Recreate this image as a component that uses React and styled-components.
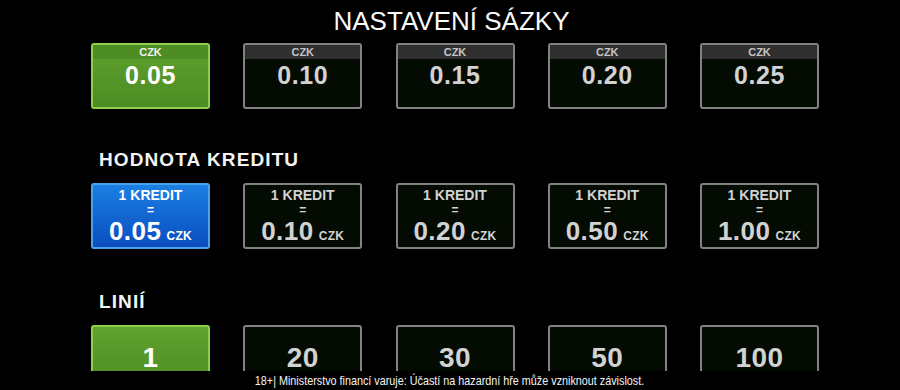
import React from "react"
import styled, { createGlobalStyle, css } from "styled-components"

const GlobalStyle = createGlobalStyle`
  html, body {
    margin: 0;
    padding: 0;
    background: #000;
  }
`

const Page = styled.div`
  position: relative;
  width: 900px;
  height: 390px;
  overflow: hidden;
  background: #000;
  font-family: "Liberation Sans", Arial, sans-serif;
  color: #fff;
`

const Title = styled.div`
  height: 43px;
  line-height: 42px;
  font-size: 26px;
  text-align: center;
  padding-left: 3px;
  color: #fafafa;
`

const Label = styled.div`
  margin: ${p => p.top}px 0 13px 99px;
  font-size: 19px;
  line-height: 20px;
  font-weight: 700;
  letter-spacing: 1.1px;
  color: #f4f4f4;
`

const Row = styled.div`
  display: grid;
  grid-template-columns: repeat(5, 119px);
  column-gap: 33.25px;
  margin-left: 91px;
`

const variants = {
  idle: css`
    background: #040b03;
    border-color: #828282;
    color: #d2d2d2;
  `,
  green: css`
    background: linear-gradient(#61a130, #4c8c22);
    border-color: #8ccf4a;
    color: #fff;
  `,
  blue: css`
    background: linear-gradient(#1b7fe2, #0a4dc0);
    border-color: #47a3f0;
    color: #fff;
  `,
}

const Box = styled.div`
  box-sizing: border-box;
  height: 66px;
  border: 2px solid;
  border-radius: 3px;
  overflow: hidden;
  display: flex;
  flex-direction: column;
  align-items: center;
  font-weight: 700;
  ${p => variants[p.$variant]}
`

const Strip = styled.div`
  align-self: stretch;
  height: 14px;
  line-height: 14px;
  font-size: 11px;
  text-align: center;
  background: ${p => (p.$active ? "#4e8c24" : "#2f2f2f")};
  color: ${p => (p.$active ? "#f0f0f0" : "#c4c4c4")};
`

const BetValue = styled.div`
  padding-top: 4px;
  font-size: 25px;
  line-height: 25px;
  letter-spacing: 0.6px;
`

const CreditTop = styled.div`
  padding-top: 2px;
  font-size: 14px;
  line-height: 16px;
`

const Equals = styled.div`
  font-size: 12px;
  line-height: 14px;
`

const CreditValue = styled.div`
  font-size: 26px;
  line-height: 29px;
  letter-spacing: 0.5px;
`

const Unit = styled.span`
  margin-left: 5px;
  font-size: 12px;
  letter-spacing: 0.3px;
`

const LineValue = styled.div`
  flex: 1;
  display: flex;
  align-items: center;
  font-size: 28px;
  letter-spacing: 0.5px;
`

const Footer = styled.div`
  position: absolute;
  left: 0;
  right: 0;
  bottom: 0;
  height: 19px;
  background: #000;
  text-align: center;
  font-size: 13px;
  line-height: 19px;
  color: #f4f4f4;
`

const Narrow = styled.span`
  display: inline-block;
  transform: scaleX(0.83);
  transform-origin: center;
`

const bets = ["0.05", "0.10", "0.15", "0.20", "0.25"]
const credits = ["0.05", "0.10", "0.20", "0.50", "1.00"]
const lines = ["1", "20", "30", "50", "100"]

const App = () => {
  return (
    <Page>
      <GlobalStyle />
      <Title>NASTAVENÍ SÁZKY</Title>

      <Row>
        {bets.map((b, i) => (
          <Box key={b} $variant={i === 0 ? "green" : "idle"}>
            <Strip $active={i === 0}>CZK</Strip>
            <BetValue>{b}</BetValue>
          </Box>
        ))}
      </Row>

      <Label top={41}>HODNOTA KREDITU</Label>
      <Row>
        {credits.map((c, i) => (
          <Box key={c} $variant={i === 0 ? "blue" : "idle"}>
            <CreditTop>1 KREDIT</CreditTop>
            <Equals>=</Equals>
            <CreditValue>
              {c}
              <Unit>CZK</Unit>
            </CreditValue>
          </Box>
        ))}
      </Row>

      <Label top={43}>LINIÍ</Label>
      <Row>
        {lines.map((l, i) => (
          <Box key={l} $variant={i === 0 ? "green" : "idle"}>
            <LineValue>{l}</LineValue>
          </Box>
        ))}
      </Row>

      <Footer>
        <Narrow>18+| Ministerstvo financí varuje: Účastí na hazardní hře může vzniknout závislost.</Narrow>
      </Footer>
    </Page>
  )
}

export default App
